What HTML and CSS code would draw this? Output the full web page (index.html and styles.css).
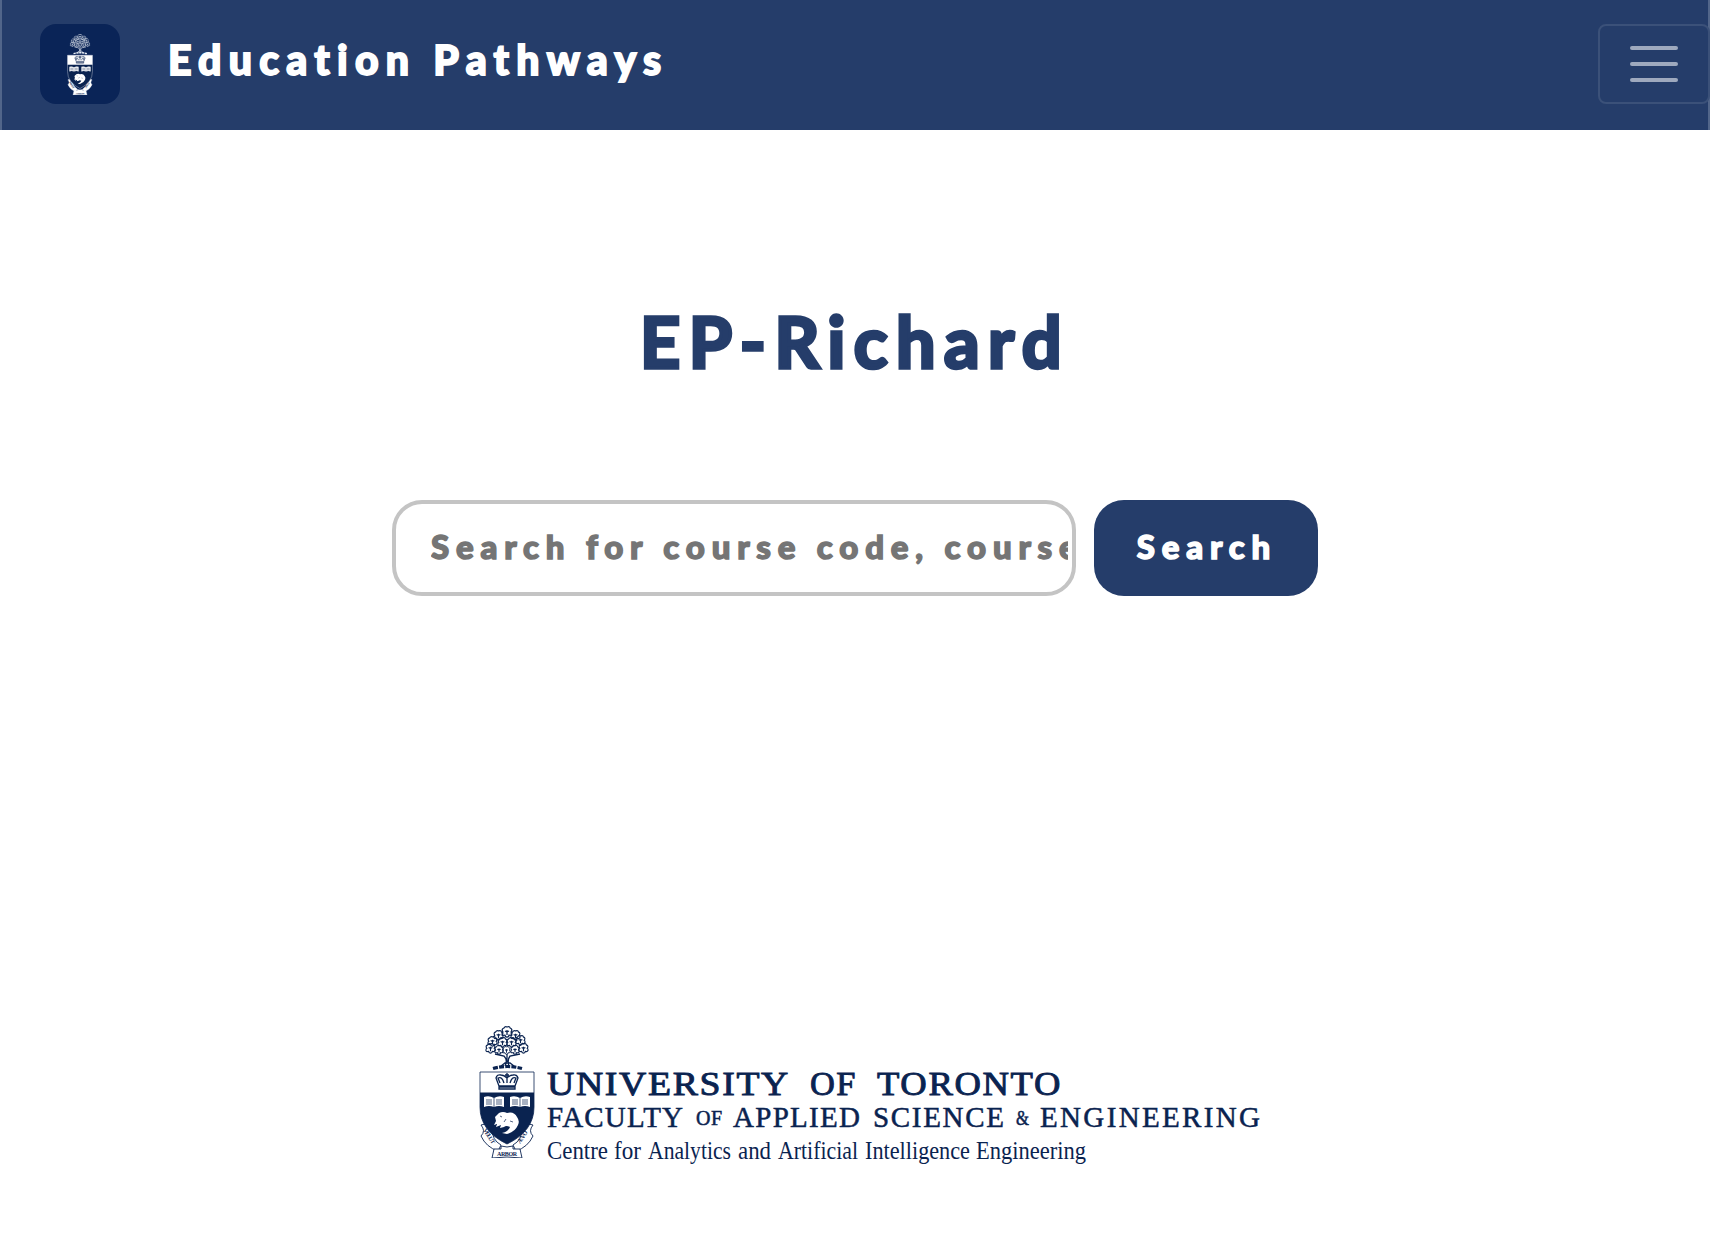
FILE: index.html
```html
<!DOCTYPE html>
<html lang="en">
<head>
<meta charset="utf-8">
<title>Education Pathways</title>
<link rel="stylesheet" href="styles.css">
</head>
<body>
<svg class="defs" aria-hidden="true">
  <symbol id="leaf" viewBox="-6 -6 12 12" overflow="visible">
    <path fill="none" stroke="currentColor" stroke-width="1.25" stroke-linejoin="round" d="M0 5q-2 0-2-2-3 1-3-1 0-2 1-2-2-3 1-4 1-2 3-1 3-1 3 1 3 1 1 4 1 0 1 2-1 2-3 1 0 2-2 2zM0 3v-5M-2-1l2 1 2-1"/>
  </symbol>
  <symbol id="crest" viewBox="0 0 56 132">
    <!-- oak tree -->
    <g>
      <use href="#leaf" x="22" y="0" width="12" height="12"/>
      <use href="#leaf" x="14" y="4" width="11" height="11"/>
      <use href="#leaf" x="31" y="4" width="11" height="11"/>
      <use href="#leaf" x="8" y="10" width="11" height="11"/>
      <use href="#leaf" x="18" y="11" width="11" height="11"/>
      <use href="#leaf" x="27" y="11" width="11" height="11"/>
      <use href="#leaf" x="36" y="9" width="11" height="11"/>
      <use href="#leaf" x="6" y="17" width="11" height="11"/>
      <use href="#leaf" x="15" y="19" width="10" height="10"/>
      <use href="#leaf" x="31" y="19" width="10" height="10"/>
      <use href="#leaf" x="39" y="17" width="11" height="11"/>
      <use href="#leaf" x="23" y="20" width="9" height="9"/>
    </g>
    <path fill="none" stroke="currentColor" stroke-width="1.3" d="M26 40q3-6-1-10l-9-2M30 40q-2-6 1-10l10-2M28 36v-8M22 40l4-3h5l4 3"/>
    <path fill="none" stroke="currentColor" stroke-width="3.2" stroke-dasharray="5 1.2" d="M14 42.500q14-4 29 0"/>
    <!-- motto ribbon -->
    <g class="ribbon" stroke="currentColor" stroke-width=".9" stroke-linejoin="round">
      <path d="M2 99q4-2 9 0l2 4q0 11 9 16l-3 6q-12-4-17-15 5-5 0-11zM54 99q-4-2-9 0l-2 4q0 11-9 16l3 6q12-4 17-15-5-5 0-11z"/>
      <path d="M15 123h7v-3q6 2 12 0v3h7l2 9q-15-2-30 0z"/>
    </g>
    <g class="motto">
      <text x="18" y="130" textLength="20">ARBOR</text>
      <text transform="translate(4 104) rotate(58)" textLength="17">VELUT</text>
      <text transform="translate(41 118) rotate(-55)" textLength="14">ÆVO</text>
    </g>
    <!-- shield -->
    <path class="field" d="M1 66h54v15q0 24-27 37Q1 105 1 81z"/>
    <path class="chief" d="M1 46h54v20.500H1z"/>
    <path fill="none" stroke="currentColor" stroke-width=".8" d="M1 46h54v35q0 24-27 37Q1 105 1 81z"/>
    <g class="crown">
      <path d="M20 60l-3-8q1-4 5-3 3 0 6 3 3-3 6-3 4-1 5 3l-3 8zM21 57l-2-5q4-2 6 5M35 57l2-5q-4-2-6 5M28 52v5M20 63h16v-2H20zM26 49h4M28 47v5"/>
    </g>
    <g class="charge">
      <path d="M5 71q5-2 10 1 5-3 10-1v10q-5-2-10 0-5-2-10 0zM31 71q5-2 10 1 5-3 10-1v10q-5-2-10 0-5-2-10 0z"/>
      <path d="M16 91l4-4q4-2 8 0 7-2 10 4 3 4 1 8-3 7-11 9l-5-1q6-1 8-6-4-2-6 0l-4 1 1-3-5 2 1-3-3 1 2-4z"/>
    </g>
    <path class="pages" d="M15 72v9M41 72v9M7 74h6M7 76h6M7 78h6M17 74h6M17 76h6M17 78h6M33 74h6M33 76h6M33 78h6M43 74h6M43 76h6M43 78h6M21 90l2 1M27 93l-2 3M31 95l3 1"/>
  </symbol>
</svg>

<header class="navbar">
  <a class="brand" href="#">
    <span class="brand-mark"><svg class="crest"><use href="#crest"/></svg></span>
    <span class="brand-name">Education Pathways</span>
  </a>
  <button class="toggler" aria-label="Toggle navigation"><span></span><span></span><span></span></button>
</header>

<main class="home">
  <h1 class="title">EP-Richard</h1>
  <form class="search">
    <input class="search-input" type="text" placeholder="Search for course code, course name, keyword ...">
    <button class="search-button" type="button">Search</button>
  </form>
</main>

<footer class="footer">
  <svg class="crest"><use href="#crest"/></svg>
  <svg class="wordmark" viewBox="0 0 714 110">
    <g class="line-university">
      <text y="38.500" x="0" textLength="243" lengthAdjust="spacingAndGlyphs">UNIVERSITY</text>
      <text y="38.500" x="263" textLength="47" lengthAdjust="spacingAndGlyphs">OF</text>
      <text y="38.500" x="330" textLength="185" lengthAdjust="spacingAndGlyphs">TORONTO</text>
    </g>
    <g class="line-faculty">
      <text y="71" x="0" textLength="136">FACULTY</text>
      <text class="minor" y="69" x="149" textLength="26">OF</text>
      <text y="71" x="186" textLength="127">APPLIED</text>
      <text y="71" x="326" textLength="131">SCIENCE</text>
      <text class="minor amp" y="69" x="469" textLength="13" lengthAdjust="spacingAndGlyphs">&amp;</text>
      <text y="71" x="493" textLength="220">ENGINEERING</text>
    </g>
    <g class="line-centre">
      <text y="102.500" x="0" textLength="61" lengthAdjust="spacingAndGlyphs">Centre</text>
      <text y="102.500" x="67" textLength="27" lengthAdjust="spacingAndGlyphs">for</text>
      <text y="102.500" x="101" textLength="83" lengthAdjust="spacingAndGlyphs">Analytics</text>
      <text y="102.500" x="191" textLength="33" lengthAdjust="spacingAndGlyphs">and</text>
      <text y="102.500" x="231" textLength="80" lengthAdjust="spacingAndGlyphs">Artificial</text>
      <text y="102.500" x="318" textLength="105" lengthAdjust="spacingAndGlyphs">Intelligence</text>
      <text y="102.500" x="429" textLength="110" lengthAdjust="spacingAndGlyphs">Engineering</text>
    </g>
  </svg>
</footer>
</body>
</html>
```

FILE: styles.css
```css
* { box-sizing: border-box; }

body {
  margin: 0;
  height: 1236px;
  display: flex;
  flex-direction: column;
  background: #fff;
  font-family: Lato, "Open Sans", sans-serif;
  font-weight: 900;
  overflow: hidden;
}

.defs { display: none; }

.navbar {
  height: 130px;
  flex: none;
  display: flex;
  justify-content: space-between;
  align-items: flex-start;
  padding: 24px 0 0 38px;
  background: #253d6a;
  border: solid #52668a;
  border-width: 0 2px;
}

.brand {
  display: flex;
  gap: 48px;
  color: #fff;
  text-decoration: none;
}

.brand-mark {
  width: 80px;
  height: 80px;
  display: flex;
  align-items: center;
  justify-content: center;
  border-radius: 16px;
  background: #0a2457;
}

.brand-mark .crest { width: 26px; height: 61px; }

.brand-name {
  font-size: 41px;
  line-height: 72px;
  letter-spacing: 7.250px;
  -webkit-text-stroke: 1.800px #fff;
  white-space: nowrap;
}

.toggler {
  width: 112px;
  height: 80px;
  margin-right: -2px;
  padding: 0 0 0 30px;
  display: flex;
  flex-direction: column;
  justify-content: center;
  gap: 12px;
  background: none;
  border: 2px solid #3b5179;
  border-radius: 8px;
}

.toggler span {
  width: 48px;
  height: 4px;
  border-radius: 2px;
  background: #9ea9be;
}

.crest { display: block; color: #0a2350; }
.brand .crest { color: #e8edf5; }
.ribbon { fill: #fff; }
.field { fill: #0a2350; }
.chief, .charge { fill: #fff; }
.crown { fill: none; stroke: #0a2350; stroke-width: 1.3; }
.pages { fill: none; stroke: #0a2350; stroke-width: .7; }
.motto { fill: #0a2350; font: 700 6px "Liberation Serif", serif; }

.home {
  flex: 1;
  display: flex;
  flex-direction: column;
  align-items: center;
}

.title {
  margin: 161px 0 0;
  font-size: 70px;
  line-height: 100px;
  letter-spacing: 8.500px;
  color: #253d6a;
  -webkit-text-stroke: 3.500px #253d6a;
}

.search {
  display: flex;
  gap: 18px;
  margin-top: 109px;
}

.search-input,
.search-button {
  height: 96px;
  border-radius: 30px;
  font: 900 33px Lato, "Open Sans", sans-serif;
  letter-spacing: 6.800px;
}

.search-input {
  width: 684px;
  padding: 0 4px 4px 35px;
  border: 4px solid #c4c4c4;
  background: #fff;
}

.search-input::placeholder {
  color: #757575;
  -webkit-text-stroke: 1.500px #757575;
}

.search-button {
  width: 224px;
  padding: 0 0 4px 2px;
  border: 0;
  background: #253d6a;
  color: #fff;
  -webkit-text-stroke: 1.500px #fff;
}

.footer {
  flex: none;
  height: 210px;
  display: flex;
  gap: 12px;
  padding-left: 479px;
}

.footer .crest { width: 56px; height: 132px; }

.wordmark {
  width: 714px;
  height: 110px;
  margin-top: 30px;
  overflow: visible;
  fill: #0a2350;
  font-family: "Liberation Serif", serif;
  font-weight: 400;
}

.line-university { font-size: 34px; letter-spacing: 1.500px; stroke: #0a2350; stroke-width: .9; }
.line-faculty { font-size: 29px; stroke: #0a2350; stroke-width: .5; }
.line-faculty .minor { font-size: 20px; }
.line-centre { font-size: 25px; }
```
